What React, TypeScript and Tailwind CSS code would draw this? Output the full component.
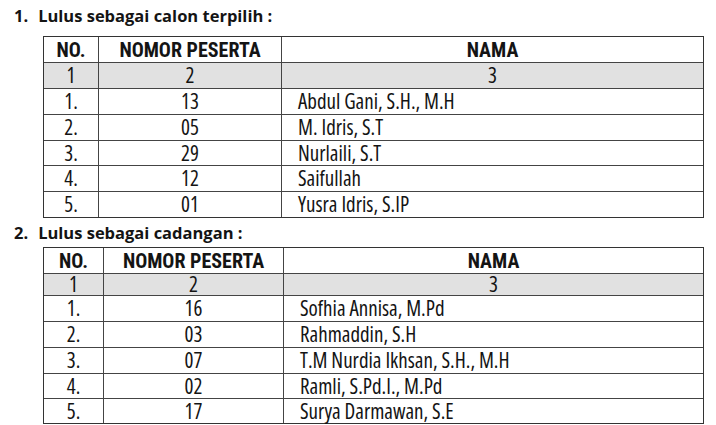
const terpilih = [
  { no: "1.", peserta: "13", nama: "Abdul Gani, S.H., M.H", h: "h-[26px]" },
  { no: "2.", peserta: "05", nama: "M. Idris, S.T", h: "h-[26px]" },
  { no: "3.", peserta: "29", nama: "Nurlaili, S.T", h: "h-[25px]" },
  { no: "4.", peserta: "12", nama: "Saifullah", h: "h-[26px]" },
  { no: "5.", peserta: "01", nama: "Yusra Idris, S.IP", h: "h-[25px]" },
];

const cadangan = [
  { no: "1.", peserta: "16", nama: "Sofhia Annisa, M.Pd", h: "h-[26px]" },
  { no: "2.", peserta: "03", nama: "Rahmaddin, S.H", h: "h-[26px]" },
  { no: "3.", peserta: "07", nama: "T.M Nurdia Ikhsan, S.H., M.H", h: "h-[26px]" },
  { no: "4.", peserta: "02", nama: "Ramli, S.Pd.I., M.Pd", h: "h-[25px]" },
  { no: "5.", peserta: "17", nama: "Surya Darmawan, S.E", h: "h-[24px]" },
];

type Row = { no: string; peserta: string; nama: string; h: string };

const Cell = ({ children, last, left }: { children: React.ReactNode; last?: boolean; left?: boolean }) => (
  <div
    className={`flex items-center ${left ? "pl-[16px]" : "justify-center"} ${last ? "" : "border-r border-[#444]"}`}
  >
    {children}
  </div>
);

const HasilTable = ({ rows, grid, indexH }: { rows: Row[]; grid: string; indexH: string }) => {
  return (
    <div className="ml-[43px] w-[661px] border border-[#333]">
      {/* header */}
      <div className={`grid ${grid} h-[26px] border-b border-[#444] font-['Roboto_Condensed',sans-serif] text-[20px] font-bold leading-none`}>
        <Cell>NO.</Cell>
        <Cell>NOMOR PESERTA</Cell>
        <Cell last>NAMA</Cell>
      </div>
      {/* column index row */}
      <div className={`grid ${grid} ${indexH} border-b border-[#444] bg-[#e1e1e1] text-[21px] leading-none`}>
        <Cell>1</Cell>
        <Cell>2</Cell>
        <Cell last>3</Cell>
      </div>
      {rows.map((r, i) => (
        <div
          key={r.no}
          className={`grid ${grid} ${r.h} text-[21px] leading-none ${i < rows.length - 1 ? "border-b border-[#444]" : ""}`}
        >
          <Cell>{r.no}</Cell>
          <Cell>{r.peserta}</Cell>
          <Cell last left>
            {r.nama}
          </Cell>
        </div>
      ))}
    </div>
  );
};

export default function App() {
  return (
    <div className="w-[716px] h-[425px] bg-white text-[#141414] font-['Open_Sans',sans-serif] font-stretch-[75%] overflow-hidden">
      <h2 className="h-[36px] flex items-center pl-[14px] pb-[3px] text-[16.5px] font-bold gap-[10px] font-stretch-normal">
        <span>1.</span>
        <span>Lulus sebagai calon terpilih :</span>
      </h2>
      <HasilTable rows={terpilih} grid="grid-cols-[55px_183px_1fr]" indexH="h-[26px]" />
      <h2 className="h-[29px] flex items-center pl-[14px] pt-[1px] text-[16.5px] font-bold gap-[10px] font-stretch-normal">
        <span>2.</span>
        <span>Lulus sebagai cadangan :</span>
      </h2>
      <HasilTable rows={cadangan} grid="grid-cols-[60px_180px_1fr]" indexH="h-[22px]" />
    </div>
  );
}
